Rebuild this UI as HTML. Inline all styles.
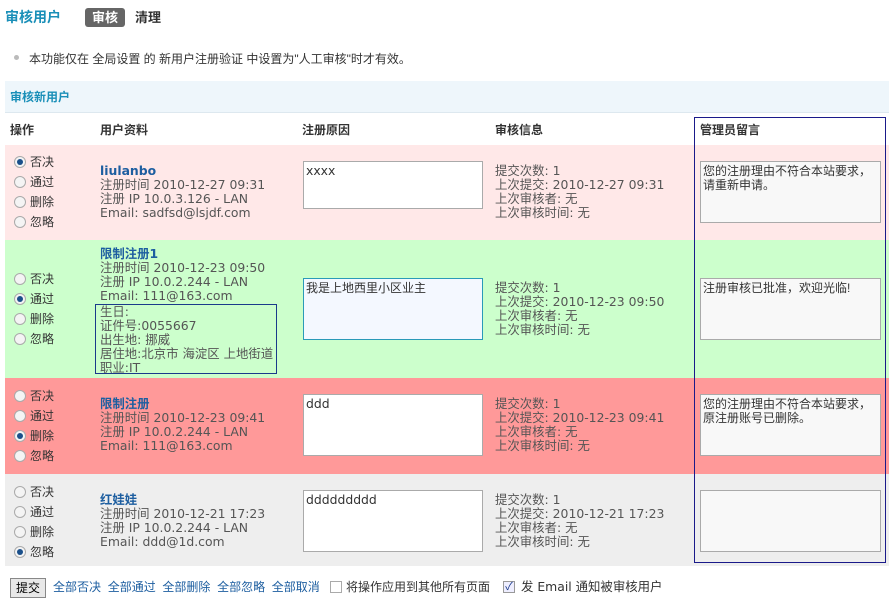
<!DOCTYPE html><html><head><meta charset="utf-8"><style>
*{margin:0;padding:0;box-sizing:border-box}
body{width:896px;height:612px;background:#fff;font:12px/14px "Liberation Sans","Noto Sans CJK SC",sans-serif;color:#555;position:relative;overflow:hidden}
.a{position:absolute;white-space:nowrap}
.b{font-weight:bold}
.row{position:absolute;left:5px;width:884px}
.r{position:absolute;left:14px;width:12px;height:12px;border:1px solid #aaa;border-radius:50%;background:#f4f4f4}
.r.on::after{content:"";position:absolute;left:2px;top:2px;width:6px;height:6px;border-radius:50%;background:#1a4f8a}
.rl{position:absolute;left:30px;color:#333}
.ta{position:absolute;border:1px solid #aaa;background:#fff;padding:2px;color:#333;white-space:normal;line-height:14px}
.nm{color:#1d5ea0;font-weight:bold}
.inf{font:12.4px/14px "DejaVu Sans","Noto Sans CJK SC",sans-serif}
a{color:#1d5ea0;text-decoration:none}
</style></head><body>
<div class="a b" style="left:5px;top:8px;font-size:14px;line-height:18px;color:#1a8fb8">审核用户</div>
<div class="a b" style="left:85px;top:8px;width:40px;height:19px;background:#666;color:#fff;border-radius:3px;text-align:center;font-size:13px;line-height:19px">审核</div>
<div class="a b" style="left:135px;top:9px;font-size:13px;line-height:18px;color:#333">清理</div>
<div class="a" style="left:14px;top:55px;width:5px;height:5px;border-radius:50%;background:#bbb"></div>
<div class="a" style="left:29px;top:52px;color:#333">本功能仅在 全局设置 的 新用户注册验证 中设置为"人工审核"时才有效。</div>
<div class="a" style="left:5px;top:81px;width:884px;height:32px;background:#eef6fb;border-bottom:1px solid #dde8ef"></div>
<div class="a b" style="left:10px;top:90px;color:#1a8fb8">审核新用户</div>
<div class="a b" style="left:10px;top:123px;color:#333">操作</div>
<div class="a b" style="left:100px;top:123px;color:#333">用户资料</div>
<div class="a b" style="left:302px;top:123px;color:#333">注册原因</div>
<div class="a b" style="left:495px;top:123px;color:#333">审核信息</div>
<div class="a b" style="left:700px;top:123px;color:#333">管理员留言</div>

<div class="row" style="top:145px;height:95px;background:#ffe8e8"></div>
<div class="row" style="top:240px;height:138px;background:#ccffcc"></div>
<div class="row" style="top:378px;height:96px;background:#ff9999"></div>
<div class="row" style="top:474px;height:92px;background:#eeeeee"></div>

<!-- row1 -->
<div class="r on" style="top:156px"></div><div class="a rl" style="top:155px">否决</div>
<div class="r" style="top:176px"></div><div class="a rl" style="top:175px">通过</div>
<div class="r" style="top:196px"></div><div class="a rl" style="top:195px">删除</div>
<div class="r" style="top:216px"></div><div class="a rl" style="top:215px">忽略</div>
<div class="a inf" style="left:100px;top:164px"><span class="nm">liulanbo</span><br>注册时间 2010-12-27 09:31<br>注册 IP 10.0.3.126 - LAN<br>Email: sadfsd@lsjdf.com</div>
<div class="ta inf" style="left:303px;top:161px;width:180px;height:48px">xxxx</div>
<div class="a inf" style="left:495px;top:164px">提交次数: 1<br>上次提交: 2010-12-27 09:31<br>上次审核者: 无<br>上次审核时间: 无</div>
<div class="ta" style="left:700px;top:161px;width:181px;height:62px;background:#f8f8f8">您的注册理由不符合本站要求，请重新申请。</div>

<!-- row2 -->
<div class="r" style="top:273px"></div><div class="a rl" style="top:272px">否决</div>
<div class="r on" style="top:293px"></div><div class="a rl" style="top:292px">通过</div>
<div class="r" style="top:313px"></div><div class="a rl" style="top:312px">删除</div>
<div class="r" style="top:333px"></div><div class="a rl" style="top:332px">忽略</div>
<div class="a inf" style="left:100px;top:247px"><span class="nm">限制注册1</span><br>注册时间 2010-12-23 09:50<br>注册 IP 10.0.2.244 - LAN<br>Email: 111@163.com</div>
<div class="a inf" style="left:95px;top:304px;width:182px;height:70px;border:1px solid #1a3a8a;padding:0 4px;overflow:hidden">生日:<br>证件号:0055667<br>出生地: 挪威<br>居住地:北京市 海淀区 上地街道<br>职业:IT</div>
<div class="ta" style="left:303px;top:278px;width:180px;height:62px;border-color:#2a9ab8;background:#f4f8ff">我是上地西里小区业主</div>
<div class="a inf" style="left:495px;top:281px">提交次数: 1<br>上次提交: 2010-12-23 09:50<br>上次审核者: 无<br>上次审核时间: 无</div>
<div class="ta" style="left:700px;top:278px;width:181px;height:62px;background:#f8f8f8">注册审核已批准，欢迎光临!</div>

<!-- row3 -->
<div class="r" style="top:390px"></div><div class="a rl" style="top:389px">否决</div>
<div class="r" style="top:410px"></div><div class="a rl" style="top:409px">通过</div>
<div class="r on" style="top:430px"></div><div class="a rl" style="top:429px">删除</div>
<div class="r" style="top:450px"></div><div class="a rl" style="top:449px">忽略</div>
<div class="a inf" style="left:100px;top:397px"><span class="nm">限制注册</span><br>注册时间 2010-12-23 09:41<br>注册 IP 10.0.2.244 - LAN<br>Email: 111@163.com</div>
<div class="ta inf" style="left:303px;top:394px;width:180px;height:62px">ddd</div>
<div class="a inf" style="left:495px;top:397px">提交次数: 1<br>上次提交: 2010-12-23 09:41<br>上次审核者: 无<br>上次审核时间: 无</div>
<div class="ta" style="left:700px;top:394px;width:181px;height:62px;background:#f8f8f8">您的注册理由不符合本站要求，原注册账号已删除。</div>

<!-- row4 -->
<div class="r" style="top:486px"></div><div class="a rl" style="top:485px">否决</div>
<div class="r" style="top:506px"></div><div class="a rl" style="top:505px">通过</div>
<div class="r" style="top:526px"></div><div class="a rl" style="top:525px">删除</div>
<div class="r on" style="top:546px"></div><div class="a rl" style="top:545px">忽略</div>
<div class="a inf" style="left:100px;top:493px"><span class="nm">红娃娃</span><br>注册时间 2010-12-21 17:23<br>注册 IP 10.0.2.244 - LAN<br>Email: ddd@1d.com</div>
<div class="ta inf" style="left:303px;top:490px;width:180px;height:62px">ddddddddd</div>
<div class="a inf" style="left:495px;top:493px">提交次数: 1<br>上次提交: 2010-12-21 17:23<br>上次审核者: 无<br>上次审核时间: 无</div>
<div class="ta" style="left:700px;top:490px;width:181px;height:62px;background:#f8f8f8"></div>

<div class="a" style="left:694px;top:117px;width:192px;height:446px;border:1px solid #1a1a8a"></div>

<div class="a" style="left:10px;top:578px;width:36px;height:20px;border:1px solid #888;background:#e8e8e8;text-align:center;line-height:18px;color:#000">提交</div>
<div class="a" style="left:53px;top:580px;color:#333"><a>全部否决</a>&nbsp; <a>全部通过</a>&nbsp; <a>全部删除</a>&nbsp; <a>全部忽略</a>&nbsp; <a>全部取消</a></div>
<div class="a" style="left:330px;top:581px;width:12px;height:12px;border:1px solid #aaa;background:#fff"></div>
<div class="a" style="left:346px;top:580px;color:#333">将操作应用到其他所有页面</div>
<div class="a" style="left:503px;top:581px;width:12px;height:12px;border:1px solid #999;background:#eef;color:#1a3a8a;font-size:11px;line-height:10px;text-align:center">✓</div>
<div class="a inf" style="left:521px;top:580px;color:#333">发 Email 通知被审核用户</div>
</body></html>
